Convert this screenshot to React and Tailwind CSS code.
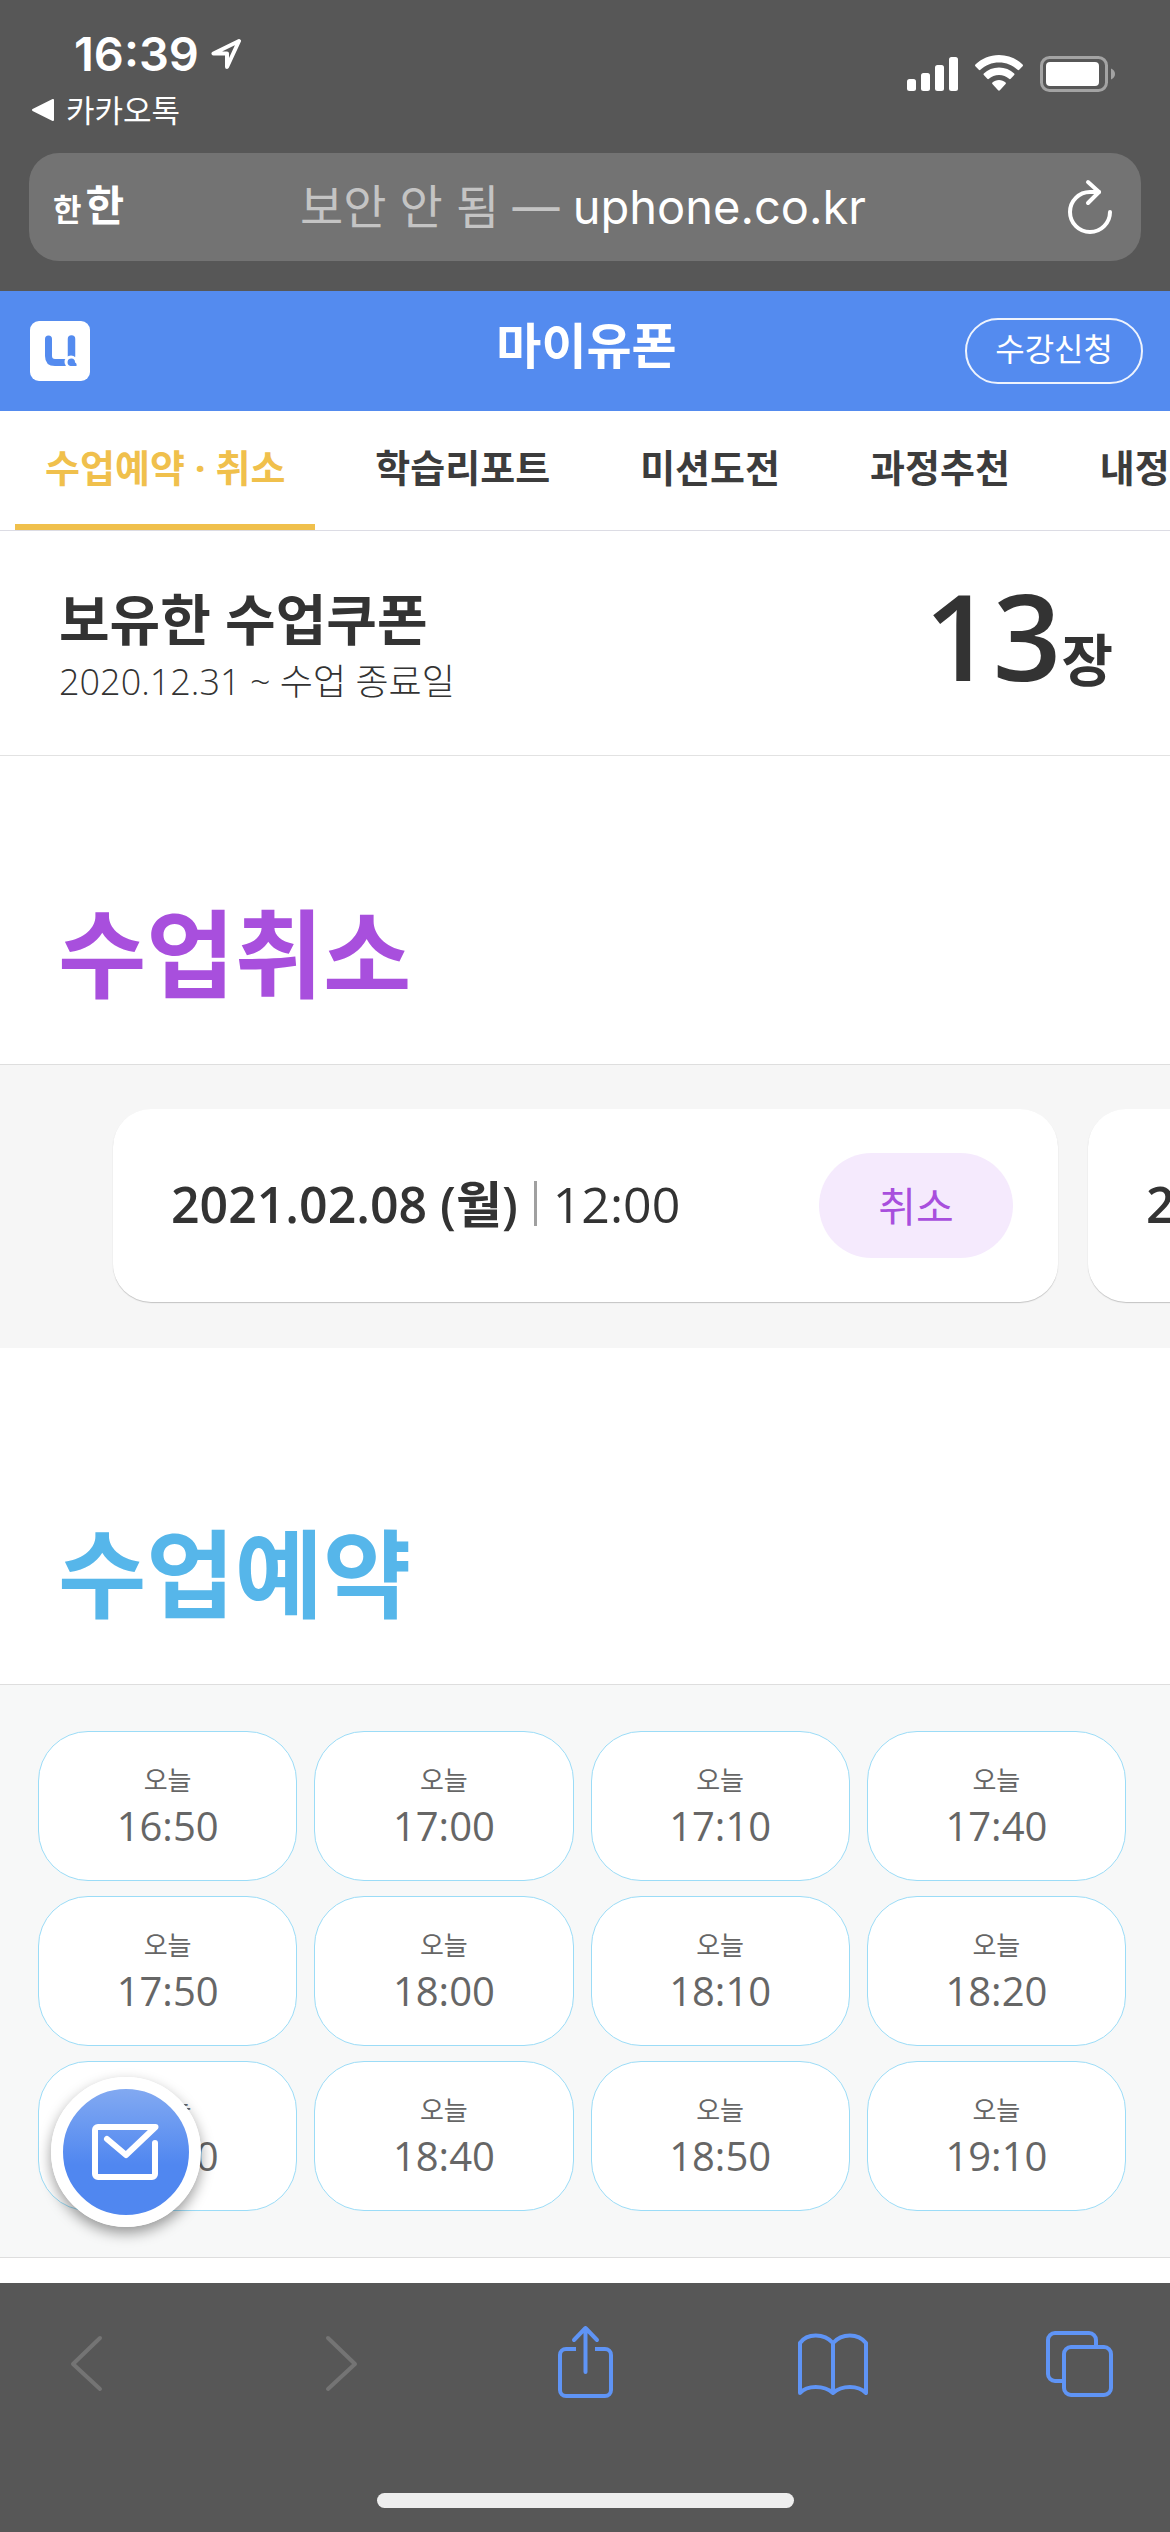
import { useState } from "react";

const TABS = ["수업예약 · 취소", "학습리포트", "미션도전", "과정추천", "내정보"];

const RESERVED = [
  { id: 1, date: "2021.02.08 (월)", time: "12:00" },
  { id: 2, date: "2021.02.09 (화)", time: "12:00" },
];

const SLOTS = [
  "16:50",
  "17:00",
  "17:10",
  "17:40",
  "17:50",
  "18:00",
  "18:10",
  "18:20",
  "18:30",
  "18:40",
  "18:50",
  "19:10",
];

function StatusBar() {
  return (
    <div className="flex justify-between pl-8 pr-[55px] pt-6 text-white">
      <div>
        <div className="flex items-center gap-3 pl-[42px] h-[60px]">
          <span className="font-['Inter',sans-serif] text-[47px] leading-[60px] font-semibold">
            16:39
          </span>
          <svg width="31" height="32" viewBox="0 0 31 32" fill="none" stroke="currentColor" strokeWidth="4" strokeLinejoin="round">
            <path d="M28 3 2.500 15.500H16V29Z" />
          </svg>
        </div>
        <a href="#kakaotalk" className="flex items-center gap-3 text-[31px] leading-[52px]">
          <svg width="22" height="22" viewBox="0 0 22 22" fill="currentColor" stroke="currentColor" strokeWidth="2" strokeLinejoin="round">
            <path d="M1 11 21 1V21Z" />
          </svg>
          카카오톡
        </a>
      </div>
      <div className="flex items-start gap-[17px] pt-[31px]">
        <svg width="51" height="36" viewBox="0 0 51 36" fill="currentColor">
          <rect x="0" y="24" width="9" height="12" rx="2.500" />
          <rect x="14" y="18" width="9" height="18" rx="2.500" />
          <rect x="28" y="10" width="9" height="26" rx="2.500" />
          <rect x="42" y="2" width="9" height="34" rx="2.500" />
        </svg>
        <svg width="48" height="36" viewBox="0 0 48 36" fill="currentColor">
          <path d="M24 0C14.800 0 6.500 3.600 .4 9.600c-.5.5-.5 1.100 0 1.600l3.400 3.600c.5.500 1.100.5 1.600 0C10.300 10.200 16.800 7.500 24 7.500s13.700 2.700 18.600 7.300c.5.5 1.100.5 1.600 0l3.400-3.600c.5-.5.5-1.100 0-1.600C41.500 3.600 33.200 0 24 0Z" />
          <path d="M24 12.500c-5.900 0-11.200 2.300-15.200 6-.5.500-.5 1.100 0 1.600l3.500 3.700c.5.500 1.100.5 1.600 0 2.700-2.400 6.200-3.900 10.100-3.900s7.400 1.500 10.100 3.900c.5.5 1.100.5 1.600 0l3.500-3.700c.5-.5.5-1.100 0-1.600-4-3.700-9.300-6-15.200-6Z" />
          <path d="M24 25c-2.500 0-4.800.9-6.600 2.400-.5.500-.5 1.100 0 1.600l5.700 6.300c.5.500 1.300.5 1.800 0l5.700-6.300c.5-.5.500-1.100 0-1.600C28.800 25.900 26.500 25 24 25Z" />
        </svg>
        <svg width="75" height="37" viewBox="0 0 75 37" fill="none">
          <rect x="1.500" y="2.500" width="65" height="33" rx="8" stroke="#a3a3a3" strokeWidth="3" />
          <rect x="6" y="7" width="53" height="24" rx="4" fill="#fff" />
          <path d="M71 13.500c2.600 1 4 3 4 5.500s-1.400 4.500-4 5.500Z" fill="#a3a3a3" />
        </svg>
      </div>
    </div>
  );
}

function AddressBar() {
  return (
    <div className="mx-[29px] mt-[17px] mb-[30px] flex h-[108px] items-center justify-between rounded-[30px] bg-[#737373] pl-6 pr-7 text-white">
      <button type="button" aria-label="글자 크기" className="flex w-[74px] items-baseline gap-1 font-bold">
        <span className="text-[31px] leading-[50px]">한</span>
        <span className="text-[42px] leading-[50px]">한</span>
      </button>
      <button type="button" className="font-['Inter','Noto_Sans_CJK_KR',sans-serif] text-[47px] leading-[60px]">
        <span className="text-[#c4c4c4]">보안 안 됨 — </span>uphone.co.kr
      </button>
      <button type="button" aria-label="새로고침" className="flex w-[74px] justify-end">
        <svg width="46" height="56" viewBox="0 0 46 56" fill="none" stroke="currentColor" strokeWidth="4" strokeLinecap="round" strokeLinejoin="round">
          <path d="M43 33a20 20 0 1 1-20-20h9" />
          <path d="M21 3 32 13 21 24" />
        </svg>
      </button>
    </div>
  );
}

function Header() {
  return (
    <header className="grid h-[120px] grid-cols-[1fr_auto_1fr] items-center bg-[#548bef] pl-[30px] pr-[27px] text-white">
      <a href="#home" aria-label="유폰">
        <svg width="60" height="60" viewBox="0 0 60 60" fill="none">
          <rect width="60" height="60" rx="9" fill="#fff" />
          <path d="M18.500 18v17q0 6.500 6.500 6.500h9.500" stroke="#548bef" strokeWidth="7" strokeLinecap="round" />
          <path d="M41.500 18v17" stroke="#548bef" strokeWidth="7.500" strokeLinecap="round" />
          <circle cx="41" cy="41" r="6.500" fill="#fff" />
          <path d="M41.500 37.500a3.800 3.800 0 0 1 3.500 4q2 .5 1.500 3.500h-6a3.800 3.800 0 0 1 1-7.500Z" fill="#548bef" />
        </svg>
      </a>
      <h1 className="pb-3 text-[49px] leading-[60px] font-bold">마이유폰</h1>
      <a
        href="#apply"
        className="justify-self-end rounded-full border-2 border-white/90 px-7 pb-1 text-[32px] leading-[58px]"
      >
        수강신청
      </a>
    </header>
  );
}

function Tabs() {
  const [active, setActive] = useState(0);

  return (
    <nav className="flex h-[120px] gap-[30px] overflow-hidden border-b border-[#dcdce4] pl-[15px]">
      {TABS.map((tab, i) => (
        <button
          key={tab}
          type="button"
          onClick={() => setActive(i)}
          className={
            i === active
              ? "shrink-0 border-b-6 border-[#f0c04c] px-[30px] text-[38px] font-bold text-[#f0c04c]"
              : "shrink-0 border-b-6 border-transparent px-[30px] text-[38px] font-bold text-[#3c3c3c]"
          }
        >
          {tab}
        </button>
      ))}
    </nav>
  );
}

function Coupon() {
  return (
    <section className="flex h-[225px] items-center justify-between border-b border-[#e2e2e2] pl-[59px] pr-[57px] text-[#333]">
      <div className="pt-3">
        <h2 className="text-[55px] leading-[66px] font-bold">보유한 수업쿠폰</h2>
        <p className="text-[36px] leading-[60px] font-light">2020.12.31 ~ 수업 종료일</p>
      </div>
      <p className="pt-2 text-[120px] leading-[130px] font-semibold">
        13<span className="text-[56px] font-bold">장</span>
      </p>
    </section>
  );
}

function CancelCard({ item, onCancel }) {
  return (
    <li className="flex h-[193px] w-[945px] shrink-0 items-center justify-between rounded-[38px] bg-white pl-[58px] pr-[45px] text-[50px] leading-[60px] text-[#333] shadow-[0_1px_1px_#c4c4c4]">
      <p className="flex items-center pb-1">
        <b className="font-semibold">{item.date}</b>
        <span className="mx-4 h-[45px] w-[3px] bg-[#a0a0a0]" />
        {item.time}
      </p>
      <button
        type="button"
        onClick={() => onCancel(item.id)}
        className="h-[105px] w-[194px] rounded-full bg-[#f5eafd] text-[41px] text-[#a84fdd]"
      >
        취소
      </button>
    </li>
  );
}

function SlotButton({ time }) {
  return (
    <button
      type="button"
      className="flex h-[150px] flex-col items-center justify-center rounded-[50px] border border-[#9bdcf7] bg-white text-[#666]"
    >
      <span className="text-[26px] leading-[40px]">오늘</span>
      <span className="text-[40px] leading-[52px]">{time}</span>
    </button>
  );
}

function MailButton() {
  return (
    <button
      type="button"
      aria-label="문의하기"
      className="absolute bottom-[30px] left-[51px] flex size-[150px] items-center justify-center rounded-full border-12 border-white bg-linear-to-b from-[#82a9f1] to-[#5087f0] to-60% shadow-[0_6px_14px_rgba(0,0,0,0.4)]"
    >
      <svg width="68" height="56" viewBox="0 0 68 56" fill="none" stroke="#fff" strokeWidth="6" strokeLinecap="round" strokeLinejoin="round">
        <path d="M63 19V50a3 3 0 0 1-3 3H6a3 3 0 0 1-3-3V6a3 3 0 0 1 3-3H63.500L34 31 15 15" />
      </svg>
    </button>
  );
}

function Toolbar() {
  return (
    <footer className="mt-auto h-[249px] bg-[#575757] pt-[41px]">
      <div className="flex justify-between pl-[50px] pr-[54px] text-[#5f94f5]">
        <button type="button" aria-label="뒤로" className="text-[#747474]">
          <svg width="72" height="80" viewBox="0 0 72 80" fill="none" stroke="currentColor" strokeWidth="4" strokeLinecap="round" strokeLinejoin="round">
            <path d="M50 14 23 40 50 65" />
          </svg>
        </button>
        <button type="button" aria-label="앞으로" className="text-[#747474]">
          <svg width="72" height="80" viewBox="0 0 72 80" fill="none" stroke="currentColor" strokeWidth="4" strokeLinecap="round" strokeLinejoin="round">
            <path d="M29 14 56 40 29 65" />
          </svg>
        </button>
        <button type="button" aria-label="공유">
          <svg width="72" height="80" viewBox="0 0 72 80" fill="none" stroke="currentColor" strokeWidth="4" strokeLinecap="round" strokeLinejoin="round">
            <path d="M29 25H19a6 6 0 0 0-6 6V66a6 6 0 0 0 6 6H58a6 6 0 0 0 6-6V31a6 6 0 0 0-6-6H48" strokeLinecap="butt" />
            <path d="M38.500 48V4M27 16 38.500 4 50 16" />
          </svg>
        </button>
        <button type="button" aria-label="책갈피">
          <svg width="72" height="80" viewBox="0 0 72 80" fill="none" stroke="currentColor" strokeWidth="4" strokeLinecap="round" strokeLinejoin="round">
            <path d="M37 19C28 9 11 9 4 19V69C11 61 28 61 37 69C46 61 62 61 70 69V19C62 9 46 9 37 19V69" />
          </svg>
        </button>
        <button type="button" aria-label="탭">
          <svg width="72" height="80" viewBox="0 0 72 80" fill="none" stroke="currentColor" strokeWidth="4">
            <rect x="20" y="23" width="47" height="48" rx="7" />
            <path d="M20 57H11a7 7 0 0 1-7-7V16a7 7 0 0 1 7-7H45a7 7 0 0 1 7 7v7" />
          </svg>
        </button>
      </div>
      <div className="mx-auto mt-[89px] h-[15px] w-[417px] rounded-full bg-[#eee]" />
    </footer>
  );
}

export default function App() {
  const [reserved, setReserved] = useState(RESERVED);

  const handleCancel = (id) => {
    setReserved(reserved.filter((item) => item.id !== id));
  };

  return (
    <div className="flex min-h-screen flex-col overflow-x-hidden bg-white font-['Open_Sans','Noto_Sans_CJK_KR',sans-serif]">
      <div className="h-[291px] bg-[#575757]">
        <StatusBar />
        <AddressBar />
      </div>
      <Header />
      <main>
        <Tabs />
        <Coupon />

        <section>
          <h2 className="px-[58px] pt-[132px] pb-[46px] text-[96px] leading-[130px] font-bold text-[#a84fdd]">
            수업취소
          </h2>
          <ul className="flex gap-[30px] overflow-hidden border-t border-[#dedede] bg-[#f6f6f6] pt-11 pb-[46px] pl-[113px]">
            {reserved.map((item) => (
              <CancelCard key={item.id} item={item} onCancel={handleCancel} />
            ))}
          </ul>
        </section>

        <section>
          <h2 className="px-[58px] pt-[160px] pb-[46px] text-[96px] leading-[130px] font-bold text-[#56b6ea]">
            수업예약
          </h2>
          <div className="relative border-y border-[#dedede] bg-[#f7f8f8] pt-[46px] pr-[44px] pb-[46px] pl-[38px]">
            <div className="grid grid-cols-4 gap-x-[17px] gap-y-[15px]">
              {SLOTS.map((time) => (
                <SlotButton key={time} time={time} />
              ))}
            </div>
            <MailButton />
          </div>
        </section>
      </main>
      <Toolbar />
    </div>
  );
}
